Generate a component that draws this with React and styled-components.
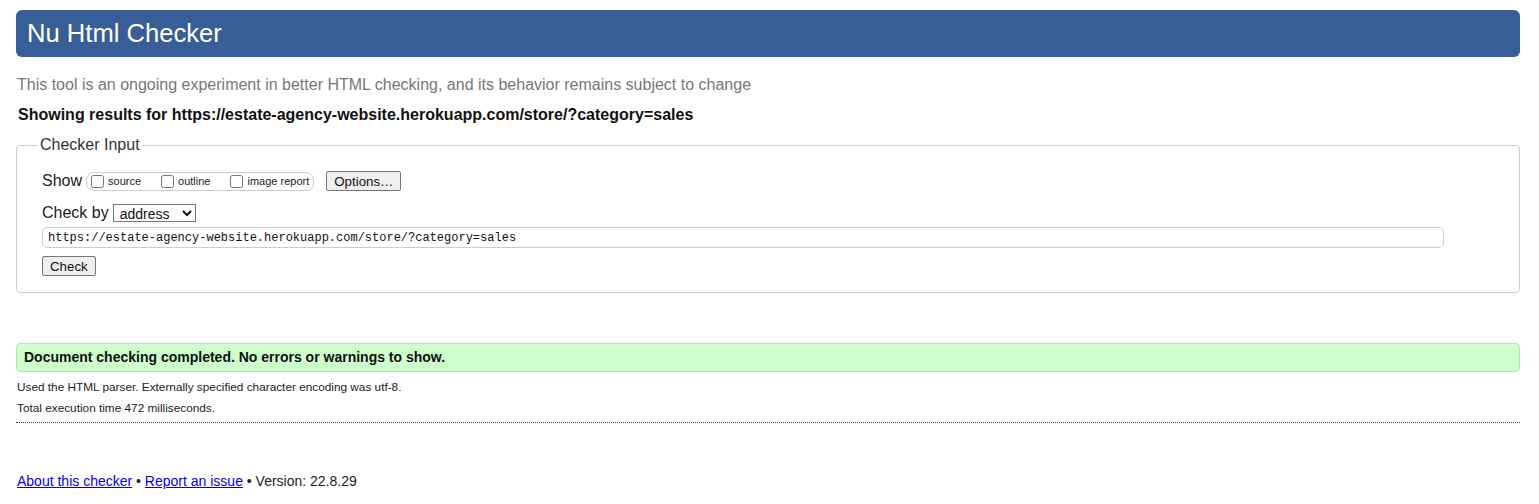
import React from "react";
import styled, { createGlobalStyle } from "styled-components";

const GlobalStyle = createGlobalStyle`
  body {
    margin: 0;
    background: #fff;
    font-family: "Liberation Sans", Arial, sans-serif;
    color: #111;
  }
`;

const Page = styled.div`
  padding: 10px 19px 0 16px;
`;

const Header = styled.h1`
  margin: 0;
  height: 47px;
  line-height: 46px;
  padding: 0 11px;
  background: #375e97;
  color: #fff;
  font-size: 25.6px;
  font-weight: normal;
  border-radius: 6px;
`;

const Tagline = styled.p`
  margin: 18px 0 0 1px;
  line-height: 20px;
  font-size: 16px;
  color: #777;
`;

const Results = styled.p`
  margin: 10px 0 0 2px;
  line-height: 20px;
  font-size: 16px;
  font-weight: bold;
`;

const Fieldset = styled.fieldset`
  margin: 10px 0 0;
  padding: 6px 25px 16px;
  border: 1px solid #ccc;
  border-radius: 4px;
`;

const Legend = styled.legend`
  padding: 0 2px;
  margin-left: -4px;
  font-size: 16px;
  line-height: 20px;
  color: #333;
`;

const Row = styled.div`
  display: flex;
  align-items: center;
  gap: ${(p) => p.gap || 4}px;
  height: 20px;
  margin-top: ${(p) => p.top || 0}px;
`;

const Label = styled.span`
  font-size: 16px;
  color: #222;
`;

const Group = styled.div`
  display: flex;
  align-items: center;
  gap: 20px;
  height: 17px;
  padding: 0 4px 0 4px;
  border: 1px solid #ccc;
  border-radius: 8px;
`;

const Option = styled.label`
  display: flex;
  align-items: center;
  gap: 4px;
  font-size: 11px;
  color: #222;
`;

const Box = styled.input`
  margin: 0;
  width: 13px;
  height: 13px;
`;

const Button = styled.button`
  height: 20px;
  padding: 0 7px;
  font-family: "Liberation Sans", Arial, sans-serif;
  font-size: 13.3px;
  color: #111;
  background: #efefef;
  border: 1px solid #767676;
  border-radius: 2px;
  margin-left: ${(p) => p.left || 0}px;
`;

const Select = styled.select`
  width: 83px;
  height: 18px;
  font-family: "Liberation Sans", Arial, sans-serif;
  font-size: 14px;
  padding: 0 2px;
  border: 1px solid #767676;
  border-radius: 0;
  background: #fff;
  color: #111;
`;

const UrlInput = styled.input`
  display: block;
  box-sizing: border-box;
  width: 1402px;
  height: 21px;
  margin-top: 4px;
  padding: 0 5px;
  font-family: "Liberation Mono", "DejaVu Sans Mono", monospace;
  font-size: 12px;
  color: #111;
  border: 1px solid #ccc;
  border-radius: 5px;
`;

const Success = styled.div`
  margin-top: 50px;
  height: 27px;
  line-height: 27px;
  padding: 0 7px;
  background: #ccffcc;
  border: 1px solid #c2dcc2;
  border-radius: 4px;
  font-size: 14px;
  font-weight: bold;
`;

const Note = styled.p`
  margin: ${(p) => p.top}px 0 0 1px;
  font-size: 11.8px;
  line-height: 20px;
  color: #222;
`;

const Rule = styled.hr`
  margin: 4px 0 0;
  border: 0;
  border-top: 1px dotted #444;
`;

const Footer = styled.p`
  margin: 48px 0 0 1px;
  font-size: 14px;
  line-height: 20px;
  color: #222;

  a {
    color: #0000ee;
    text-decoration: underline;
  }
`;

export default function App() {
  return (
    <Page>
      <GlobalStyle />
      <Header>Nu Html Checker</Header>
      <Tagline>
        This tool is an ongoing experiment in better HTML checking, and its behavior remains subject to change
      </Tagline>
      <Results>Showing results for https://estate-agency-website.herokuapp.com/store/?category=sales</Results>
      <Fieldset>
        <Legend>Checker Input</Legend>
        <Row top={10}>
          <Label>Show</Label>
          <Group>
            <Option>
              <Box type="checkbox" /> source
            </Option>
            <Option>
              <Box type="checkbox" /> outline
            </Option>
            <Option>
              <Box type="checkbox" /> image report
            </Option>
          </Group>
          <Button left={8}>Options…</Button>
        </Row>
        <Row top={12}>
          <Label>Check by</Label>
          <Select defaultValue="address">
            <option value="address">address</option>
            <option value="file">file upload</option>
            <option value="text">text input</option>
          </Select>
        </Row>
        <UrlInput
          type="text"
          defaultValue="https://estate-agency-website.herokuapp.com/store/?category=sales"
        />
        <Row top={8}>
          <Button>Check</Button>
        </Row>
      </Fieldset>
      <Success>Document checking completed. No errors or warnings to show.</Success>
      <Note top={5}>Used the HTML parser. Externally specified character encoding was utf-8.</Note>
      <Note top={1}>Total execution time 472 milliseconds.</Note>
      <Rule />
      <Footer>
        <a href="#about">About this checker</a> • <a href="#issue">Report an issue</a> • Version: 22.8.29
      </Footer>
    </Page>
  );
}
